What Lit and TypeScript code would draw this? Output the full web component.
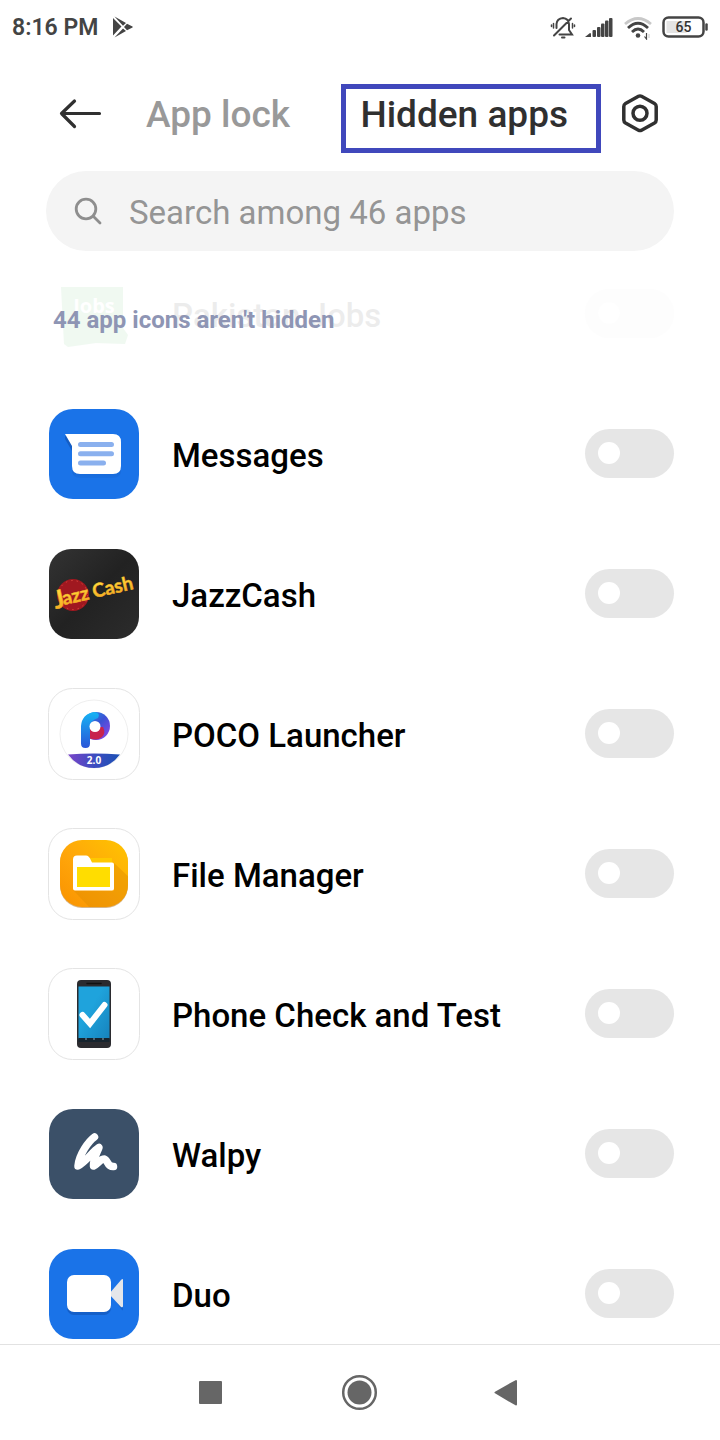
import { LitElement, html, css, svg, type TemplateResult } from "lit";
import { customElement, property, state } from "lit/decorators.js";

interface AppEntry {
  id: string;
  name: string;
  hidden: boolean;
}

const art: Record<string, TemplateResult> = {
  jobs: svg`
    <path d="M15 21 L77 21 L77 62 L82 69 L79 78 L50 77 L22 81 L18 78 Z" fill="#35b24a"/>
    <text x="48" y="47" font-size="20" font-weight="700" text-anchor="middle" fill="#fff">Jobs</text>`,
  messages: svg`
    <defs><linearGradient id="ms" x1="0" y1="0" x2="0" y2="1"><stop offset=".5" stop-color="#0d47a1" stop-opacity=".5"/><stop offset="1" stop-color="#0d47a1" stop-opacity=".1"/></linearGradient></defs>
    <rect x="3" y="3" width="90" height="90" rx="24" fill="#1a73e8"/>
    <path d="M19 30 H67 Q75 30 75 38 V64 Q75 72 67 72 H34 Q26 72 26 64 V45 L19 33 Z" fill="url(#ms)"/>
    <path d="M19 28 H67 Q75 28 75 36 V60 Q75 68 67 68 H34 Q26 68 26 60 V40 Z" fill="#fff"/>
    <path d="M34.500 38.500 H65.500 M34.500 47.700 H65.500 M34.500 57 H57.500" stroke="#8ab0ee" stroke-width="5" stroke-linecap="round"/>`,
  jazz: svg`
    <defs>
      <linearGradient id="jz" x1="0" y1="0" x2="0" y2="1"><stop offset=".3" stop-color="#ffd83a"/><stop offset="1" stop-color="#f4a01c"/></linearGradient>
      <linearGradient id="jb" x1="0" y1="0" x2="1" y2="1"><stop offset="0" stop-color="#333"/><stop offset=".5" stop-color="#222"/><stop offset="1" stop-color="#2c2c2c"/></linearGradient>
    </defs>
    <rect x="3" y="3" width="90" height="90" rx="22" fill="url(#jb)"/>
    <circle cx="27" cy="49" r="16" fill="#a01820"/>
    <circle cx="27" cy="49" r="14.500" fill="none" stroke="#d8453c" stroke-width="1" stroke-dasharray="1.500 4"/>
    <g transform="rotate(-13 48 48)" fill="url(#jz)" stroke="#f6b52a" stroke-width=".5" font-family="Lato, sans-serif" font-weight="700">
      <text x="7" y="54" font-size="25">J</text>
      <text x="16" y="52" font-size="19">azz</text>
      <text x="47" y="52" font-size="19">Cash</text>
    </g>`,
  poco: svg`
    <defs>
      <linearGradient id="pa" x1="0" y1="0" x2="0" y2="1"><stop offset="0" stop-color="#16b4f4"/><stop offset="1" stop-color="#2a55d8"/></linearGradient>
      <linearGradient id="pb" x1="0" y1="0" x2="1" y2="1"><stop offset="0" stop-color="#1aa6f0"/><stop offset=".5" stop-color="#3b52d4"/><stop offset="1" stop-color="#9a44ea"/></linearGradient>
      <linearGradient id="pc" x1="0" y1="0" x2="1" y2="0"><stop offset="0" stop-color="#7a45c8"/><stop offset=".5" stop-color="#3d4cc0"/><stop offset="1" stop-color="#1b50b4"/></linearGradient>
    </defs>
    <rect x="2.500" y="2.500" width="91" height="91" rx="24" fill="#fff" stroke="#e4e4e4"/>
    <circle cx="48" cy="48" r="34" fill="#fff" stroke="#efefef"/>
    <circle cx="50" cy="40" r="14" fill="url(#pb)"/>
    <path d="M41 41 H57 Q60 47 56 51 Q50 56 41 51 Z" fill="#c8234e"/>
    <path d="M35 57.500 V40 Q36 28 48 26 Q55 27 52 32 Q44 34 44 42 V57.500 Q44 62 39.500 62 Q35 62 35 57.500 Z" fill="url(#pa)"/>
    <circle cx="49" cy="40.500" r="5.500" fill="#fff"/>
    <path d="M22 68.500 Q48 66.500 74 68.500 Q64 82 48 82 Q32 82 22 68.500 Z" fill="url(#pc)"/>
    <text x="48" y="78" font-size="10" font-weight="700" text-anchor="middle" fill="#fff">2.0</text>`,
  files: svg`
    <defs><linearGradient id="fa" x1="1" y1="0" x2="0" y2="1"><stop offset="0" stop-color="#ffc400"/><stop offset=".55" stop-color="#ffa60a"/><stop offset="1" stop-color="#f99200"/></linearGradient>
      <clipPath id="fc"><rect x="14" y="14" width="68" height="67" rx="22"/></clipPath></defs>
    <rect x="2.500" y="2.500" width="91" height="91" rx="24" fill="#fff" stroke="#e4e4e4"/>
    <rect x="14" y="15" width="68" height="67" rx="22" fill="#b9833a" opacity=".6"/>
    <rect x="14" y="14" width="68" height="67" rx="22" fill="url(#fa)"/>
    <path d="M28 65 L46 84 H84 V52 L68 37 V65 Z" fill="#e08c00" opacity=".45" clip-path="url(#fc)"/>
    <rect x="44" y="32" width="22" height="8" fill="#ffc800"/>
    <path d="M27 34 Q27 30 31 30 H40 Q43 30 45 35 L46 37 H66 Q68 37 68 39 V63 Q68 65 66 65 H29 Q27 65 27 63 Z" transform="translate(0 -.5)" fill="#fff"/>
    <rect x="31" y="41" width="33" height="20" fill="#ffdd00"/>`,
  check: svg`
    <defs><linearGradient id="ck" x1="0" y1="0" x2="1" y2="1"><stop offset=".4" stop-color="#1fa3dc"/><stop offset="1" stop-color="#1683bd"/></linearGradient></defs>
    <rect x="2.500" y="2.500" width="91" height="91" rx="24" fill="#fff" stroke="#e4e4e4"/>
    <rect x="31" y="14" width="34" height="68" rx="4" fill="#2b2b2f"/>
    <path d="M41 17.500 H55" stroke="#111" stroke-width="1.500" stroke-linecap="round"/>
    <rect x="32.500" y="20.500" width="31" height="52" fill="url(#ck)"/>
    <rect x="32.500" y="72" width="31" height="4" fill="#16242e"/>
    <path d="M40 72 V74 M48 72 V74 M57 72 V74" stroke="#8aa4b4"/>
    <path d="M36.500 49 L44 57.500 L58.500 39" fill="none" stroke="#fff" stroke-width="6" stroke-linecap="round"/>`,
  walpy: svg`
    <rect x="3" y="3" width="90" height="90" rx="24" fill="#3b5068"/>
    <path d="M48.500 31 C43 35 33 48 32 60 C40 56 46 46 53 41.500 C51 47 47 53 47.500 60 C52 58 54 53 58.500 53 C62 54 61 61 67.500 60.500" fill="none" stroke="#fff" stroke-width="7.500" stroke-linecap="round" stroke-linejoin="round"/>`,
  duo: svg`
    <rect x="3" y="3" width="90" height="90" rx="24" fill="#1a73e8"/>
    <rect x="21" y="32" width="44" height="37" rx="7" fill="#0d47a1" opacity=".45"/>
    <path d="M65 48 L76 36 Q77 35 77 37 V63 Q77 65 76 64 Z" fill="#0d47a1" opacity=".4"/>
    <path d="M63 48 L75 34 Q77 32 77 34 V60 Q77 62 75 61 Z" fill="#e4e6ea"/>
    <rect x="21" y="29" width="44" height="37" rx="7" fill="#fff"/>`,
};

@customElement("app-row")
class AppRow extends LitElement {
  @property() name = "";
  @property() icon = "";
  @property({ type: Boolean }) checked = false;

  static styles = css`
    :host { display: block; }
    .row {
      display: flex;
      align-items: center;
      gap: 30px;
      height: 140px;
      padding: 0 46px;
      cursor: pointer;
    }
    .icon { width: 96px; height: 96px; flex: none; font-family: "Open Sans", sans-serif; }
    .name { flex: 1; padding-top: 4px; font-size: 33px; line-height: 40px; font-weight: 500; color: #000; }
    .switch {
      appearance: none;
      flex: none;
      display: flex;
      align-items: center;
      width: 89px;
      height: 49px;
      margin: 0 0 2px;
      padding: 0 13px;
      border-radius: 25px;
      background: #e6e6e6;
      cursor: pointer;
    }
    .switch::before {
      content: "";
      width: 22px;
      height: 22px;
      border-radius: 50%;
      background: #fff;
    }
    .switch:checked { justify-content: flex-end; background: #1a73e8; }
  `;

  render() {
    return html`<label class="row">
      <svg class="icon" viewBox="0 0 96 96" fill="none" aria-hidden="true">${art[this.icon]}</svg>
      <span class="name">${this.name}</span>
      <input class="switch" type="checkbox" role="switch" .checked=${this.checked} />
    </label>`;
  }
}

@customElement("status-bar")
class StatusBar extends LitElement {
  static styles = css`
    :host { display: block; }
    .bar { display: flex; align-items: center; height: 54px; padding: 0 11px 0 12px; color: #444; }
    .time { font-size: 23px; line-height: 28px; font-weight: 600; padding-top: 2px; }
    .play { width: 22px; height: 24px; margin-left: 14px; }
    .tray { display: flex; align-items: center; gap: 8px; margin-left: auto; }
    .glyph { width: 30px; height: 26px; }
    .battery { width: 48px; height: 24px; }
  `;

  render() {
    return html`<div class="bar">
      <span class="time">8:16 PM</span>
      <svg class="play" viewBox="0 0 22 24" fill="#444" aria-hidden="true">
        <path d="M1 3 L9.500 11.500 L1 20.500 Z M2.500 1.500 L14 8 L11 10.800 Z M2.500 22.500 L11 13.500 L14 16 Z M15 8.800 L20.500 11.500 Q21 12 20.500 12.500 L15 15.200 L12 12 Z"/>
      </svg>
      <span class="tray">
        <svg class="glyph" viewBox="0 0 30 26" fill="none" stroke="#444" stroke-width="2" stroke-linecap="round" aria-hidden="true">
          <path d="M9.500 14 V10 Q10 4.500 16 4 Q21.500 4.500 22 10 V16 L25 20.500 H12.500 M7 21.500 L24 4.500"/>
          <path d="M6.500 9.500 V14 M25.500 9.500 V14 M4.500 11 V12.500 M27.500 11 V12.500" stroke-width="1.500"/>
          <path d="M15 23.500 H17.500" stroke-width="2"/>
        </svg>
        <svg class="glyph" viewBox="0 0 30 26" fill="#444" aria-hidden="true">
          <path d="M0 23 L5 19 Q6 19 6 20 V23 Z"/><rect x="7.500" y="16" width="3.500" height="7" rx="1"/><rect x="12" y="13" width="3.500" height="10" rx="1"/><rect x="16" y="9.500" width="3.500" height="13.500" rx="1"/><rect x="20" y="6.500" width="3.500" height="16.500" rx="1"/><rect x="24" y="4" width="3.500" height="19" rx="1"/>
        </svg>
        <svg class="glyph" viewBox="0 0 30 26" fill="none" stroke="#444" stroke-width="2.800" aria-hidden="true">
          <path d="M2 10 Q15 -1 28 10" stroke="#c8c8c8"/>
          <path d="M5 14 Q15 4.500 25 14 M9 18 Q15 12 21 18"/>
          <circle cx="15" cy="21.500" r="2.300" fill="#444" stroke="none"/>
          <path d="M23.500 19 V25 L21.500 22.500" stroke-width="1.200"/>
          <path d="M26 20 V24" stroke="#c8c8c8" stroke-width="1"/>
        </svg>
        <svg class="battery" viewBox="0 0 48 24" aria-hidden="true">
          <rect x="2.500" y="2.500" width="40" height="19" rx="5" fill="none" stroke="#444" stroke-width="2.500"/>
          <rect x="5.500" y="6" width="20" height="12" fill="#e4e4e4"/>
          <path d="M45.500 9.500 V14.500" stroke="#444" stroke-width="2.500" stroke-linecap="round"/>
          <text x="22.500" y="17" font-size="14" font-weight="500" text-anchor="middle" fill="#333">65</text>
        </svg>
      </span>
    </div>`;
  }
}

@customElement("app-root")
class AppRoot extends LitElement {
  @state() private apps: AppEntry[] = [
    { id: "messages", name: "Messages", hidden: false },
    { id: "jazz", name: "JazzCash", hidden: false },
    { id: "poco", name: "POCO Launcher", hidden: false },
    { id: "files", name: "File Manager", hidden: false },
    { id: "check", name: "Phone Check and Test", hidden: false },
    { id: "walpy", name: "Walpy", hidden: false },
    { id: "duo", name: "Duo", hidden: false },
  ];

  static styles = css`
    :host {
      display: flex;
      flex-direction: column;
      height: 100vh;
      background: #fff;
      font-family: Roboto, sans-serif;
    }
    button { border: 0; margin: 0; padding: 0; background: none; font: inherit; cursor: pointer; }
    .header { display: flex; align-items: flex-start; padding: 30px 58px 0 56px; }
    .action { display: flex; align-items: center; height: 59px; }
    .action svg { width: 44px; height: 44px; }
    .back svg { width: 48px; }
    .tabs { flex: 1; display: flex; align-items: flex-start; justify-content: space-between; padding: 0 17px 0 42px; }
    .tab { height: 61px; font-size: 37px; line-height: 51px; font-weight: 500; color: #999; }
    .tab.selected { height: 69px; padding: 0 28px 8px 14px; border: 5px solid #4048bc; color: #303030; }
    .search {
      display: flex;
      align-items: center;
      gap: 27px;
      height: 80px;
      margin: 18px 46px 0;
      padding: 0 28px;
      border-radius: 40px;
      background: #f4f4f4;
    }
    .search svg { width: 28px; height: 28px; flex: none; }
    .field {
      flex: 1;
      min-width: 0;
      height: 60px;
      padding: 2px 0 0;
      border: 0;
      outline: 0;
      background: none;
      font: 400 33px/40px Roboto, sans-serif;
      color: #303030;
    }
    .field::placeholder { color: #959595; opacity: 1; }
    .list { position: relative; flex: 1; min-height: 0; overflow: hidden; }
    .leaving { margin-top: -7px; opacity: 0.07; }
    .count {
      position: absolute;
      top: 54px;
      left: 53px;
      margin: 0;
      font-size: 24px;
      line-height: 30px;
      font-weight: 700;
      color: #8e95b4;
    }
    .nav {
      display: grid;
      grid-template-columns: repeat(3, 149px);
      justify-content: center;
      align-items: center;
      height: 95px;
      border-top: 1px solid #e2e2e2;
    }
    .nav svg { display: block; width: 40px; height: 40px; margin: 0 auto; }
  `;

  render() {
    return html`
      <status-bar></status-bar>
      <header class="header">
        <button class="action back" aria-label="Back">
          <svg viewBox="0 0 48 44" fill="none" stroke="#303030" stroke-width="3.200" stroke-linecap="round" stroke-linejoin="round"><path d="M43.500 21.500 H6 M18.500 9 L5.500 21.500 L18.500 34.500"/></svg>
        </button>
        <nav class="tabs">
          <button class="tab">App lock</button>
          <button class="tab selected">Hidden apps</button>
        </nav>
        <button class="action" aria-label="Settings">
          <svg viewBox="0 0 44 44" fill="none" stroke="#303030" stroke-width="3.500" stroke-linejoin="round"><path d="M20.500 4.300 Q22 3.500 23.500 4.300 L36.500 11.500 Q38.200 12.500 38.200 14.500 V28 Q38.200 30 36.500 31 L23.500 38.200 Q22 39 20.500 38.200 L7.500 31 Q5.800 30 5.800 28 V14.500 Q5.800 12.500 7.500 11.500 Z"/><circle cx="22" cy="21.200" r="7"/></svg>
        </button>
      </header>
      <div class="search">
        <svg viewBox="0 0 28 28" fill="none" stroke="#8e8e8e" stroke-width="2.800" stroke-linecap="round" aria-hidden="true"><circle cx="12" cy="12" r="9.800"/><path d="M19.500 19.500 L26 26"/></svg>
        <input class="field" type="text" aria-label="Search apps" placeholder="Search among 46 apps" />
      </div>
      <main class="list">
        <app-row class="leaving" name="Pakistan Jobs" icon="jobs"></app-row>
        <h2 class="count">44 app icons aren't hidden</h2>
        ${this.apps.map((a) => html`<app-row .name=${a.name} .icon=${a.id} .checked=${a.hidden}></app-row>`)}
      </main>
      <nav class="nav">
        <button aria-label="Recent apps"><svg viewBox="0 0 40 40"><rect x="8" y="8" width="23" height="23" rx="1" fill="#666"/></svg></button>
        <button aria-label="Home"><svg viewBox="0 0 40 40"><circle cx="19.500" cy="19.500" r="16.300" fill="none" stroke="#666" stroke-width="2.500"/><circle cx="19.500" cy="19.500" r="12" fill="#666"/></svg></button>
        <button aria-label="Back"><svg viewBox="0 0 40 40"><path d="M6.500 19.500 L27 8 V31.500 Z" fill="#666" stroke="#666" stroke-width="2" stroke-linejoin="round"/></svg></button>
      </nav>`;
  }
}
